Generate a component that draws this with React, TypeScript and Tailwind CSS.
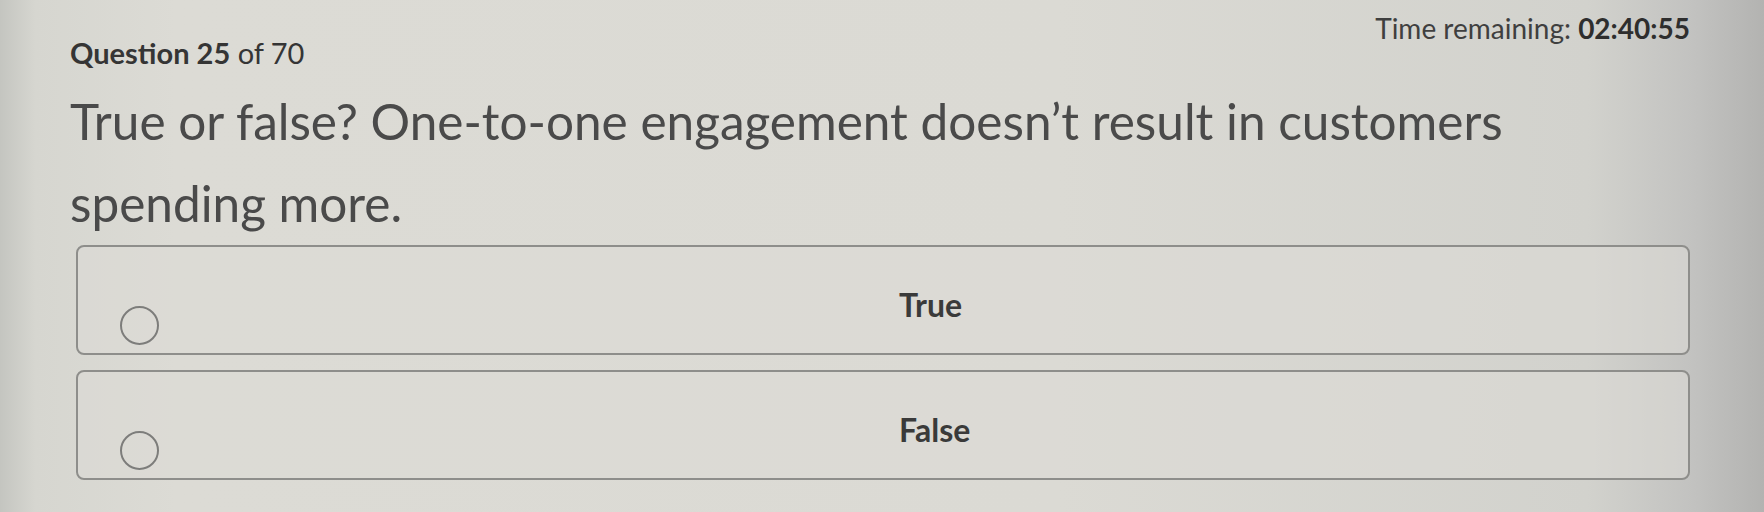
export default function App() {
  const options = ["True", "False"];
  return (
    <div className="relative h-[512px] w-full overflow-hidden bg-[linear-gradient(90deg,#c4c5c0_0%,#d6d6d0_2%,#dcdbd5_10%,#dbdad4_60%,#d2d2cd_90%,#c2c2c0_96%,#b3b3b1_100%)] font-['Lato','Open_Sans',sans-serif]">
      <div className="flex flex-col pl-[70px] pr-[74px]">
        <div className="flex items-start justify-between">
          <div className="mt-[38px] text-[29px] leading-[30px] text-[#353535]">
            <span className="font-bold">Question 25</span> of 70
          </div>
          <div className="mt-[13px] text-[28px] leading-[30px] text-[#3f3f3f]">
            Time remaining: <span className="font-bold text-[#2e2e2e]">02:40:55</span>
          </div>
        </div>

        <p className="mt-[12px] text-[49.5px] leading-[82px] text-[#4a4a4a]">
          True or false? One-to-one engagement doesn’t result in customers
          <br />
          spending more.
        </p>

        <div className="ml-[6px] mt-[1px] flex flex-col gap-[15px]">
          {options.map((label) => (
            <div
              key={label}
              className="flex h-[110px] items-center rounded-lg border-2 border-[#8e8e8b] bg-[#dcdbd5]/60 pl-[42px]"
            >
              <span className="mt-[50px] h-[39px] w-[39px] shrink-0 rounded-full border-2 border-[#7d7d7b]" />
              <span className="ml-[740px] mt-[10px] text-[32px] font-bold leading-[36px] text-[#3a3a3a]">
                {label}
              </span>
            </div>
          ))}
        </div>
      </div>
    </div>
  );
}
